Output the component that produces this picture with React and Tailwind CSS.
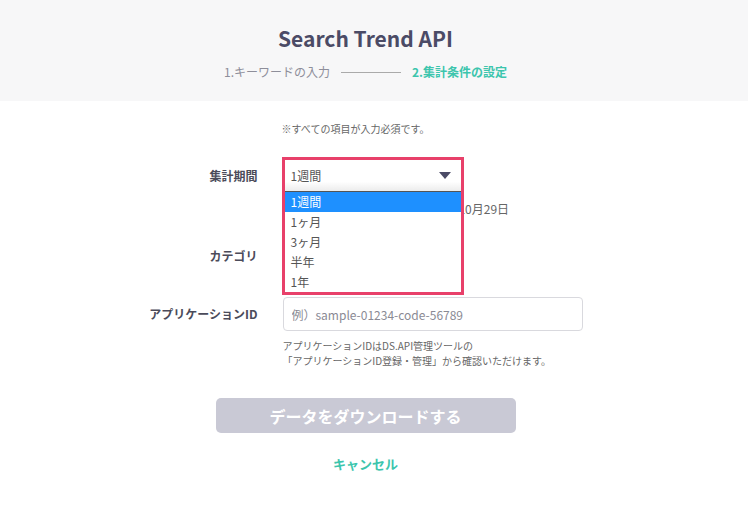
import React from 'react'

const font = { fontFamily: '"Noto Sans CJK JP", "Noto Sans", sans-serif' }

const options = ['1週間', '1ヶ月', '3ヶ月', '半年', '1年']

function Caret() {
  return (
    <svg width="12" height="7" viewBox="0 0 12 7" className="shrink-0">
      <path d="M0 0 H12 L6 7 Z" fill="#4b4b66" />
    </svg>
  )
}

function SelectBox({ value }) {
  return (
    <div className="flex h-[32px] w-[178px] items-center justify-between rounded-[3px] border border-[#d9d9de] bg-white pl-[8px] pr-[10px] text-[12px] text-[#555]">
      <span>{value}</span>
      <Caret />
    </div>
  )
}

function Label({ children, h = 'h-[32px]' }) {
  return (
    <div className={`flex ${h} w-[108px] items-center justify-end whitespace-nowrap text-[12px] font-bold text-[#4b4b5a]`}>
      {children}
    </div>
  )
}

export default function App() {
  return (
    <div className="min-h-[512px] w-[748px] bg-white" style={font}>
      {/* Header */}
      <div className="h-[101px] w-full bg-[#f7f7f8]">
        <div className="flex w-[731px] flex-col items-center pt-[23px]">
          <h1 className="text-[21px] font-bold leading-[30px] text-[#4b4b66]">Search Trend API</h1>
          <div className="mt-[9px] flex items-center gap-[11px] text-[12px] leading-[20px]">
            <span className="text-[#8e8e9a]">1.キーワードの入力</span>
            <span className="block h-px w-[60px] bg-[#aaaaaa]" />
            <span className="font-bold text-[#3cc5ad]">2.集計条件の設定</span>
          </div>
        </div>
      </div>

      {/* Form */}
      <div className="w-[731px]">
        <div className="mx-auto w-[432px] pt-[20px]">
          <p className="ml-[132px] text-[10px] leading-[16px] text-[#666]">※すべての項目が入力必須です。</p>

          {/* 集計期間 */}
          <div className="mt-[23px] flex">
            <Label>集計期間</Label>
            <div className="ml-[25px]">
              <div className="relative">
                <SelectBox value="1週間" />
                {/* opened list with highlight frame */}
                <div className="absolute left-[-1px] top-[-3px] z-10 w-[182px] border-[3px] border-[#e8406a] bg-white">
                  <div className="flex h-[32px] items-center justify-between border-b border-[#555] bg-gradient-to-b from-white from-70% to-[#ececec] pl-[6px] pr-[10px] text-[12px] text-[#555]">
                    <span>1週間</span>
                    <Caret />
                  </div>
                  <ul className="text-[12px] leading-[20px] text-[#555]">
                    {options.map((o, i) => (
                      <li
                        key={o}
                        className={i === 0 ? 'bg-[#1e90ff] pl-[6px] text-white' : 'pl-[6px]'}
                      >
                        {o}
                      </li>
                    ))}
                  </ul>
                </div>
              </div>
              <p className="mt-[9px] whitespace-nowrap text-[12px] leading-[16px] text-[#666]">2024年10月23日（水）〜2024年10月29日</p>
            </div>
          </div>

          {/* カテゴリ */}
          <div className="mt-[23px] flex">
            <Label>カテゴリ</Label>
            <div className="ml-[25px]">
              <SelectBox value="すべて" />
            </div>
          </div>

          {/* アプリケーションID */}
          <div className="mt-[25px] flex">
            <Label h="h-[34px]">アプリケーションID</Label>
            <div className="ml-[25px]">
              <input
                type="text"
                placeholder="例）sample-01234-code-56789"
                className="h-[34px] w-[300px] rounded-[4px] border border-[#d9d9de] bg-white px-[8px] text-[12px] text-[#555] placeholder:text-[#8a8a94] outline-none"
              />
              <p className="mt-[7px] text-[10px] leading-[15px] text-[#666]">
                アプリケーションIDはDS.API管理ツールの
                <br />
                「アプリケーションID登録・管理」から確認いただけます。
              </p>
            </div>
          </div>
        </div>

        {/* Actions */}
        <div className="mt-[30px] flex flex-col items-center">
          <button
            type="button"
            disabled
            className="h-[35px] w-[300px] rounded-[5px] bg-[#c9c9d5] text-[16px] font-bold text-white"
          >
            データをダウンロードする
          </button>
          <button type="button" className="mt-[20px] text-[13px] font-bold leading-[22px] text-[#3cc5ad]">
            キャンセル
          </button>
        </div>
      </div>
    </div>
  )
}
